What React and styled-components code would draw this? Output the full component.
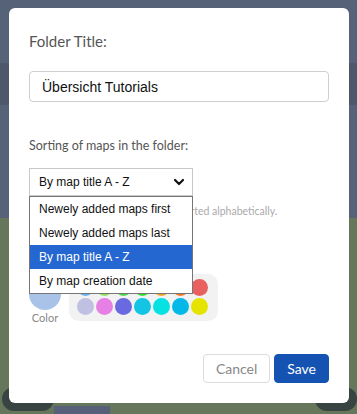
import React from "react";
import styled, { createGlobalStyle } from "styled-components";

const Global = createGlobalStyle`
  html, body { margin: 0; padding: 0; }
  body { width: 357px; height: 414px; overflow: hidden; font-family: "Liberation Sans", Arial, sans-serif; }
`;

const Page = styled.div`
  position: relative;
  width: 357px;
  height: 414px;
  overflow: hidden;
`;

const Background = styled.div`
  display: flex;
  flex-direction: column;
  height: 100%;
`;

const Band = styled.div`
  height: ${(p) => p.$h}px;
  background: ${(p) => p.$bg};
  flex: none;
`;

const GreenArea = styled.div`
  flex: 1;
  display: flex;
  flex-direction: column;
  justify-content: flex-end;
  background: #66765a;
`;

const BottomRow = styled.div`
  display: flex;
  justify-content: space-between;
  align-items: flex-start;
  height: 30px;
`;

const Pill = styled.div`
  width: ${(p) => p.$w}px;
  height: 24px;
  margin-top: 3px;
  border-radius: 12px;
  background: #374442;
  margin-left: ${(p) => p.$ml || 0}px;
`;

const SlateBlock = styled.div`
  width: 56px;
  height: 8px;
  margin-top: 22px;
  background: #566179;
`;

const Spacer = styled.div`
  flex: 1;
`;

const Modal = styled.div`
  position: absolute;
  top: 8px;
  left: 9px;
  width: 340px;
  height: 395px;
  box-sizing: border-box;
  background: #fff;
  border-radius: 6px;
  padding: 24px 20px 20px;
  display: flex;
  flex-direction: column;
`;

const Label = styled.div`
  font-family: "Lato", "Open Sans", sans-serif;
  font-size: ${(p) => p.$size}px;
  line-height: ${(p) => p.$lh}px;
  color: #555;
  margin-top: ${(p) => p.$mt || 0}px;
`;

const TextInput = styled.div`
  margin-top: 21px;
  height: 31px;
  box-sizing: border-box;
  border: 1px solid #cfcfcf;
  border-radius: 4px;
  padding: 0 12px;
  display: flex;
  align-items: center;
  font-family: "Liberation Sans", Arial, sans-serif;
  font-size: 14px;
  color: #111;
`;

const SelectWrap = styled.div`
  position: relative;
  margin-top: 14px;
  width: 164px;
`;

const SelectBox = styled.div`
  height: 28px;
  box-sizing: border-box;
  border: 1px solid #c9c9c9;
  padding: 0 7px 0 9px;
  display: flex;
  align-items: center;
  justify-content: space-between;
  font-size: 12px;
  color: #111;
`;

const OptionList = styled.ul`
  position: absolute;
  top: 28px;
  left: 0;
  width: 164px;
  box-sizing: border-box;
  margin: 0;
  padding: 0;
  list-style: none;
  background: #fff;
  border: 1px solid #767676;
  z-index: 2;
`;

const Option = styled.li`
  height: 24px;
  padding: 0 9px;
  display: flex;
  align-items: center;
  font-size: 12px;
  color: ${(p) => (p.$active ? "#fff" : "#111")};
  background: ${(p) => (p.$active ? "#2467d0" : "#fff")};
`;

const Hint = styled.div`
  margin-top: 8px;
  font-family: "Lato", "Open Sans", sans-serif;
  font-size: 10.5px;
  line-height: 14px;
  color: #aaa;
  white-space: nowrap;
`;

const ColorRow = styled.div`
  margin-top: 56px;
  display: flex;
  align-items: flex-start;
  gap: 8px;
`;

const Picker = styled.div`
  margin-top: 4px;
  display: flex;
  flex-direction: column;
  align-items: center;
  gap: 1px;
`;

const Swatch = styled.div`
  width: ${(p) => p.$d}px;
  height: ${(p) => p.$d}px;
  border-radius: 50%;
  background: ${(p) => p.$c};
`;

const PickerLabel = styled.div`
  font-family: "Lato", "Open Sans", sans-serif;
  font-size: 11px;
  line-height: 14px;
  color: #888;
`;

const Palette = styled.div`
  background: #f2f2f2;
  border-radius: 10px;
  padding: 5px 10px 6px 8px;
  display: grid;
  grid-template-columns: repeat(7, 17px);
  gap: 2px 2px;
`;

const Actions = styled.div`
  margin-top: auto;
  display: flex;
  justify-content: flex-end;
  gap: 4px;
`;

const Button = styled.button`
  height: 29px;
  box-sizing: border-box;
  padding: 0 12px;
  border-radius: 4px;
  border: 1px solid ${(p) => (p.$primary ? "#1553b3" : "#dcdcdc")};
  background: ${(p) => (p.$primary ? "#1553b3" : "#fff")};
  color: ${(p) => (p.$primary ? "#fff" : "#888")};
  font-family: "Lato", "Open Sans", sans-serif;
  font-size: 14px;
`;

const Chevron = () => (
  <svg width="12" height="8" viewBox="0 0 12 8">
    <polyline points="2,2 6,6 10,2" fill="none" stroke="#111" strokeWidth="2.2" strokeLinecap="round" strokeLinejoin="round" />
  </svg>
);

const row1 = ["#6cb0e8", "#8ee05a", "#4ad84a", "#2ee02e", "#f0a020", "#f07820", "#e86060"];
const row2 = ["#c0c0e2", "#e680e4", "#6a6ae0", "#14c4e4", "#06e2e2", "#04b8e8", "#e4e400"];

const options = ["Newely added maps first", "Newely added maps last", "By map title A - Z", "By map creation date"];

export default function App() {
  return (
    <>
      <Global />
      <Page>
        <Background>
          <Band $h={63} $bg="#566277" />
          <Band $h={42} $bg="#4e586a" />
          <Band $h={113} $bg="#566277" />
          <GreenArea>
            <BottomRow>
              <Pill $w={52} $ml={2} />
              <SlateBlock />
              <Spacer />
              <Pill $w={42} />
            </BottomRow>
          </GreenArea>
        </Background>
        <Modal>
          <Label $size={15} $lh={18}>Folder Title:</Label>
          <TextInput>Übersicht Tutorials</TextInput>
          <Label $size={12.5} $lh={16} $mt={36}>Sorting of maps in the folder:</Label>
          <SelectWrap>
            <SelectBox>
              <span>By map title A - Z</span>
              <Chevron />
            </SelectBox>
            <OptionList>
              {options.map((o) => (
                <Option key={o} $active={o === "By map title A - Z"}>{o}</Option>
              ))}
            </OptionList>
          </SelectWrap>
          <Hint>Subfolders in a folder are always sorted alphabetically.</Hint>
          <ColorRow>
            <Picker>
              <Swatch $d={32} $c="#a9c3e8" />
              <PickerLabel>Color</PickerLabel>
            </Picker>
            <Palette>
              {[...row1, ...row2].map((c, i) => (
                <Swatch key={i} $d={17} $c={c} />
              ))}
            </Palette>
          </ColorRow>
          <Actions>
            <Button>Cancel</Button>
            <Button $primary>Save</Button>
          </Actions>
        </Modal>
      </Page>
    </>
  );
}
